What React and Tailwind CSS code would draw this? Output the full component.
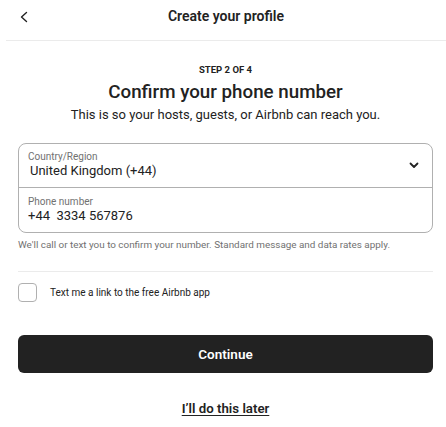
export default function App() {
  return (
    <div className="w-[446px] h-[427px] bg-white text-[#222] font-['Roboto',sans-serif]">
      {/* Header */}
      <div className="relative flex justify-center h-[41px] pt-[8px] ml-[6px] border-b border-[#ebebeb]">
        <button className="absolute left-[13px] top-[11px] text-[#222]">
          <svg width="10" height="12" viewBox="0 0 10 12" fill="none" stroke="currentColor" strokeWidth="1.4" strokeLinecap="round" strokeLinejoin="round">
            <path d="M7.5 1.5 L2.5 6 L7.5 10.5" />
          </svg>
        </button>
        <h1 className="text-[14px] leading-[16px] font-semibold">Create your profile</h1>
      </div>

      <div className="pl-[18px] pr-[13px]">
        <div className="flex flex-col items-center pt-[23px]">
          <div className="text-[9.5px] font-bold leading-[12px]">STEP 2 OF 4</div>
          <h2 className="text-[18.75px] font-medium leading-[22px] mt-[5px]">Confirm your phone number</h2>
          <p className="text-[13px] leading-[16px] mt-[4px]">This is so your hosts, guests, or Airbnb can reach you.</p>
        </div>

        {/* Inputs */}
        <div className="mt-[20px] border border-[#b0b0b0] rounded-[8px]">
          <div className="flex items-start justify-between h-[44px] pl-[9px] pr-[13px] pt-[7px] border-b border-[#b0b0b0]">
            <div className="flex flex-col">
              <span className="text-[10px] leading-[12px] text-[#717171]">Country/Region</span>
              <span className="text-[13px] leading-[16px] ml-[2px]">United Kingdom (+44)</span>
            </div>
            <svg className="mt-[11px]" width="10" height="7" viewBox="0 0 10 7" fill="none" stroke="currentColor" strokeWidth="1.8" strokeLinecap="round" strokeLinejoin="round">
              <path d="M1.5 1.5 L5 5 L8.5 1.5" />
            </svg>
          </div>
          <div className="flex flex-col h-[44px] pl-[9px] pt-[8px]">
            <span className="text-[10px] leading-[12px] text-[#717171]">Phone number</span>
            <span className="text-[13px] leading-[16px]">+44&nbsp; 3334 567876</span>
          </div>
        </div>
        <p className="text-[9.9px] leading-[12px] text-[#717171] mt-[6px]">
          We'll call or text you to confirm your number. Standard message and data rates apply.
        </p>

        <div className="mt-[20px] border-t border-[#ebebeb]" />

        <label className="flex items-center gap-[13px] mt-[11px]">
          <span className="w-[19px] h-[19px] rounded-[4px] border border-[#b0b0b0]" />
          <span className="text-[10px] leading-[12px] text-[#222]">Text me a link to the free Airbnb app</span>
        </label>

        <button className="mt-[33px] w-full h-[38px] rounded-[6px] bg-[#222] text-white text-[13.5px] font-semibold">
          Continue
        </button>

        <div className="flex justify-center mt-[28px]">
          <a className="text-[13.25px] leading-[16px] font-semibold underline underline-offset-2">I’ll do this later</a>
        </div>
      </div>
    </div>
  );
}
